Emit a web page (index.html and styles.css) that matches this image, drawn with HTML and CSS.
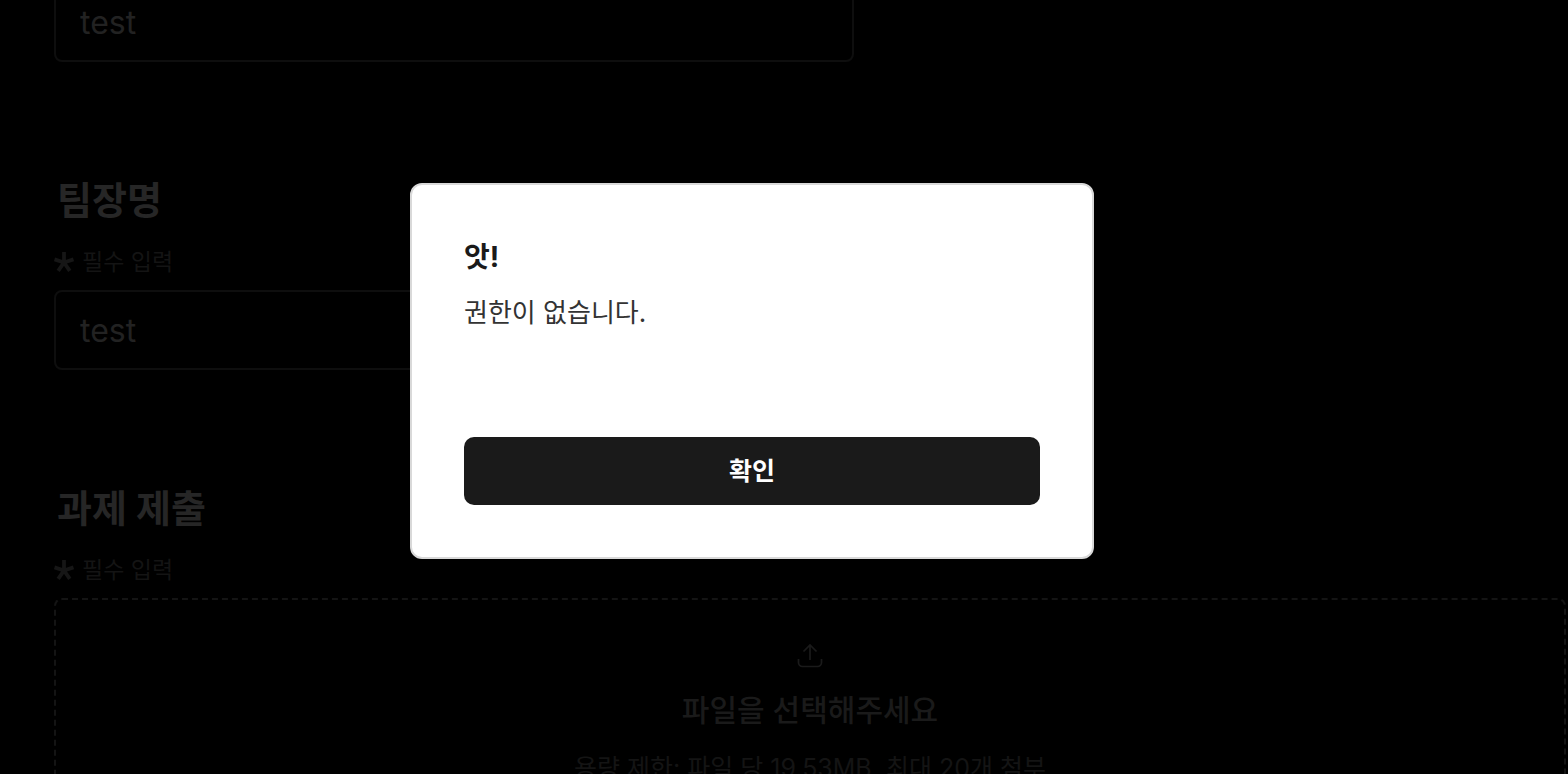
FILE: index.html
```html
<!DOCTYPE html>
<html lang="ko">
<head>
<meta charset="utf-8">
<meta name="viewport" content="width=device-width, initial-scale=1">
<title>과제 제출</title>
<link rel="stylesheet" href="styles.css">
</head>
<body>
<svg class="sprite" aria-hidden="true">
  <symbol id="star" viewBox="0 0 20 20">
    <path d="M10 10.500V0M10 10.500L.5 7.400M10 10.500L19.500 7.400M10 10.500L4.200 18.800M10 10.500L15.800 18.800" fill="none" stroke="currentColor" stroke-width="3.800"/>
  </symbol>
</svg>
<main class="form">
  <section class="group">
    <input class="field" type="text" value="test" aria-label="팀명">
  </section>
  <section class="group">
    <h2 class="title"><label for="leader">팀장명</label></h2>
    <p class="required"><svg class="star"><use href="#star"/></svg>필수 입력</p>
    <input class="field" id="leader" type="text" value="test">
  </section>
  <section class="group">
    <h2 class="title">과제 제출</h2>
    <p class="required"><svg class="star"><use href="#star"/></svg>필수 입력</p>
    <button class="dropzone" type="button">
      <svg class="upload" viewBox="0 0 32 32" aria-hidden="true">
        <path d="M16 20V5M9.500 11.500L16 5l6.500 6.500M4.500 19v3.500a4 4 0 0 0 4 4h15a4 4 0 0 0 4-4V19" fill="none" stroke="currentColor" stroke-width="1.700"/>
      </svg>
      <span class="dropzone-title">파일을 선택해주세요</span>
      <span class="dropzone-note">용량 제한: 파일 당 19.53MB, 최대 20개 첨부</span>
    </button>
  </section>
</main>
<div class="overlay">
  <div class="dialog" role="alertdialog" aria-modal="true" aria-labelledby="dialog-title" aria-describedby="dialog-text">
    <h1 class="dialog-title" id="dialog-title">앗!</h1>
    <p class="dialog-text" id="dialog-text">권한이 없습니다.</p>
    <button class="confirm" type="button">확인</button>
  </div>
</div>
</body>
</html>
```
FILE: styles.css
```css
* {
  box-sizing: border-box;
}

body {
  margin: 0;
  height: 100vh;
  overflow: hidden;
  background: #000;
  font-family: Inter, "Noto Sans CJK KR", sans-serif;
}

h1, h2, p {
  margin: 0;
}

button, input {
  font-family: inherit;
}

.sprite {
  display: none;
}

.form {
  display: flex;
  flex-direction: column;
  gap: 114px;
  margin-top: -18px;
  padding: 0 2px 0 54px;
}

.group {
  display: flex;
  flex-direction: column;
}

.title {
  margin-left: 3px;
  font-size: 38px;
  font-weight: 700;
  line-height: 48px;
  color: #262626;
}

.required {
  display: flex;
  align-items: center;
  gap: 8px;
  margin: 22px 0 12px;
  font-size: 23px;
  line-height: 32px;
  color: #141414;
}

.star {
  width: 20px;
  height: 20px;
  color: #161616;
}

.field {
  width: 100%;
  max-width: 800px;
  height: 80px;
  padding: 0 24px;
  border: 2px solid #0e0e0e;
  border-radius: 8px;
  background: #000;
  font-size: 32px;
  color: #222;
}

.dropzone {
  display: flex;
  flex-direction: column;
  align-items: center;
  padding: 40px 24px;
  border: 2px dashed #141414;
  border-radius: 8px;
  background: #000;
  color: #1a1a1a;
}

.upload {
  width: 32px;
  height: 32px;
}

.dropzone-title {
  margin: 16px 0 20px;
  font-size: 30px;
  font-weight: 500;
  line-height: 44px;
}

.dropzone-note {
  font-size: 25px;
  line-height: 32px;
  color: #141414;
}

.overlay {
  position: fixed;
  inset: 0;
  display: flex;
  align-items: center;
  justify-content: center;
  padding: 0 64px 32px 0;
}

.dialog {
  display: flex;
  flex-direction: column;
  width: 100%;
  max-width: 684px;
  padding: 52px;
  border: 2px solid #d9d9d9;
  border-radius: 12px;
  background: #fff;
}

.dialog-title {
  font-size: 28px;
  font-weight: 700;
  line-height: 40px;
  color: #1a1a1a;
}

.dialog-text {
  margin: 18px 0 106px;
  font-size: 26px;
  line-height: 36px;
  color: #333;
}

.confirm {
  padding: 16px;
  border: 0;
  border-radius: 10px;
  background: #1a1a1a;
  font-size: 25px;
  font-weight: 700;
  line-height: 36px;
  color: #fff;
}
```
